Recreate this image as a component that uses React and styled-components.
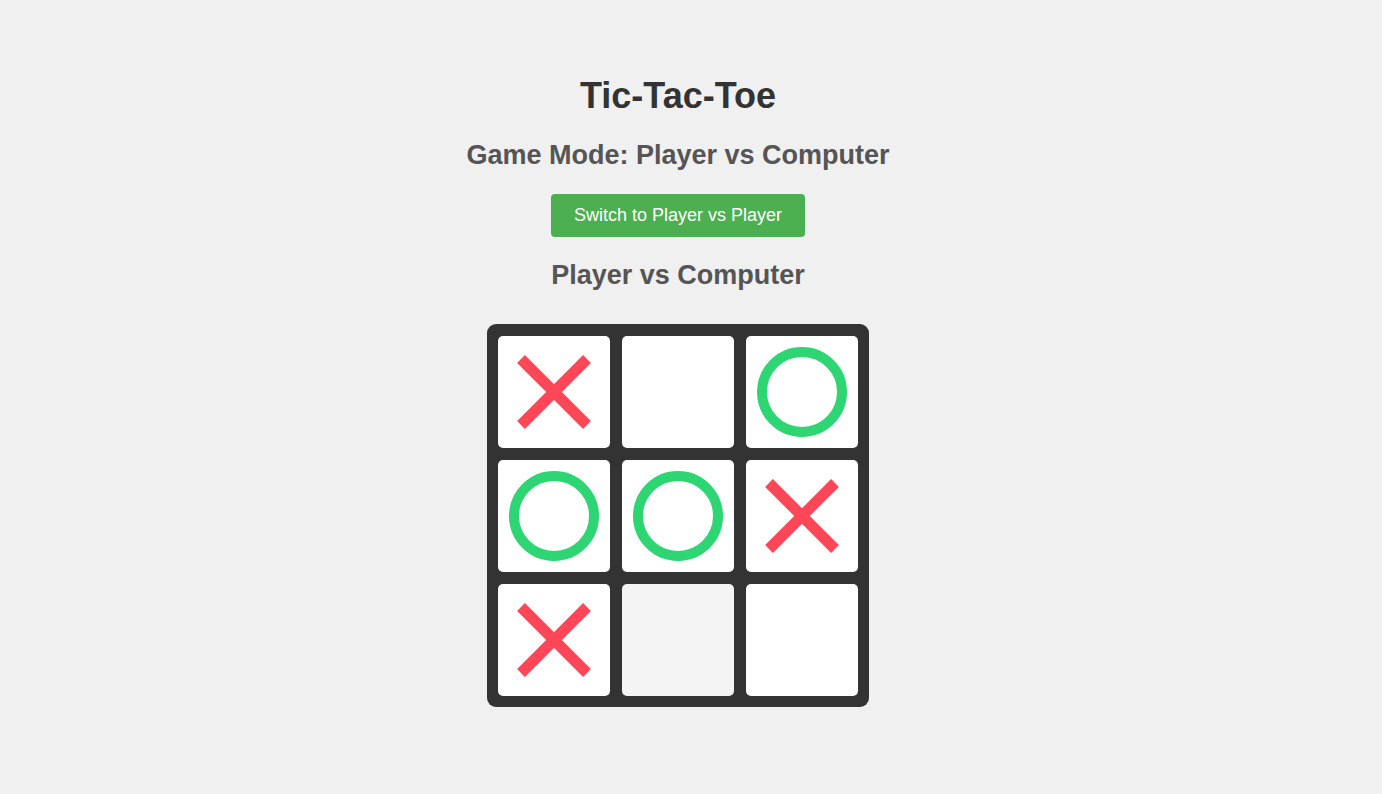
import React from "react";
import styled, { createGlobalStyle } from "styled-components";

const GlobalStyle = createGlobalStyle`
  body {
    margin: 0;
    background-color: #f0f0f0;
    font-family: "Liberation Sans", Arial, sans-serif;
  }
`;

const Page = styled.div`
  display: flex;
  flex-direction: column;
  align-items: center;
  padding: 74px 26px 0 0;
  text-align: center;
`;

const Title = styled.h1`
  margin: 0;
  font-size: 36px;
  line-height: 44px;
  color: #333;
`;

const ModeHeading = styled.h2`
  margin: 21px 0 0;
  font-size: 27px;
  line-height: 32px;
  color: #555;
`;

const SwitchButton = styled.button`
  margin-top: 23px;
  padding: 0 23px;
  height: 43px;
  border: none;
  border-radius: 4px;
  background-color: #4caf50;
  color: #fff;
  font-family: inherit;
  font-size: 18px;
  cursor: pointer;
`;

const Status = styled.h2`
  margin: 22px 0 0;
  font-size: 27px;
  line-height: 32px;
  color: #555;
`;

const Board = styled.div`
  margin-top: 33px;
  display: grid;
  grid-template-columns: repeat(3, 112px);
  grid-template-rows: repeat(3, 112px);
  gap: 12px;
  padding: 12px 11px 11px;
  background-color: #333;
  border-radius: 9px;
`;

const Cell = styled.div`
  display: flex;
  align-items: center;
  justify-content: center;
  border-radius: 5px;
  background-color: ${(p) => (p.$hover ? "#f4f4f4" : "#fff")};
`;

const Cross = () => (
  <svg width="80" height="80" viewBox="0 0 80 80">
    <path d="M7 7 L73 73 M73 7 L7 73" stroke="#ff4757" strokeWidth="11" />
  </svg>
);

const Circle = () => (
  <svg width="92" height="92" viewBox="0 0 92 92">
    <circle cx="46" cy="46" r="40" fill="none" stroke="#2ed573" strokeWidth="10" />
  </svg>
);

const cells = ["X", "", "O", "O", "O", "X", "X", "", ""];

const App = () => {
  return (
    <>
      <GlobalStyle />
      <Page>
        <Title>Tic-Tac-Toe</Title>
        <ModeHeading>Game Mode: Player vs Computer</ModeHeading>
        <SwitchButton>Switch to Player vs Player</SwitchButton>
        <Status>Player vs Computer</Status>
        <Board>
          {cells.map((v, i) => (
            <Cell key={i} $hover={i === 7}>
              {v === "X" ? <Cross /> : v === "O" ? <Circle /> : null}
            </Cell>
          ))}
        </Board>
      </Page>
    </>
  );
};

export default App;
